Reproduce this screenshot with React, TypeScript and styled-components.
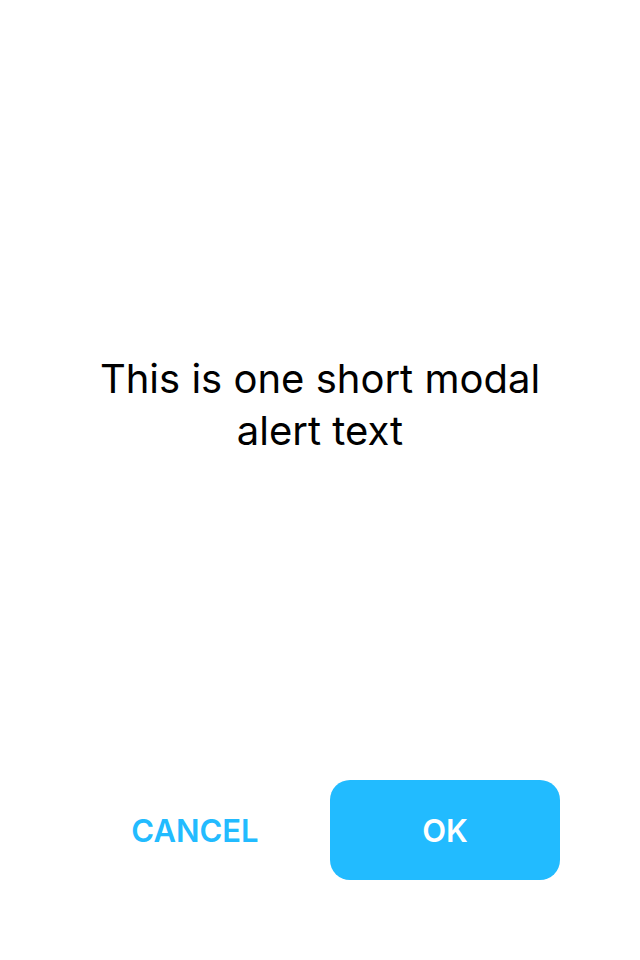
import styled, { createGlobalStyle } from 'styled-components';

const GlobalStyle = createGlobalStyle`
  html, body {
    margin: 0;
    padding: 0;
    background: #ffffff;
  }
  * {
    box-sizing: border-box;
  }
`;

const Screen = styled.div`
  display: flex;
  flex-direction: column;
  width: 640px;
  height: 960px;
  background: #ffffff;
  font-family: Inter, 'Noto Sans', sans-serif;
`;

const Message = styled.div`
  flex: 1;
  display: flex;
  align-items: center;
  justify-content: center;
  padding: 30px 60px 0;
`;

const MessageText = styled.p`
  margin: 0;
  text-align: center;
  font-size: 40px;
  line-height: 52px;
  font-weight: 400;
  color: #000000;
  max-width: 480px;
`;

const Footer = styled.div`
  display: grid;
  grid-template-columns: 1fr 1fr;
  gap: 20px;
  padding: 0 80px 80px;
`;

const Button = styled.button<{ $primary?: boolean }>`
  height: 100px;
  border: none;
  border-radius: 20px;
  font-family: Inter, 'Noto Sans', sans-serif;
  font-size: 31px;
  font-weight: 600;
  cursor: pointer;
  background: ${(p) => (p.$primary ? '#22bbff' : 'transparent')};
  color: ${(p) => (p.$primary ? '#ffffff' : '#22bbff')};
`;

export default function App() {
  return (
    <>
      <GlobalStyle />
      <Screen>
        <Message>
          <MessageText>This is one short modal alert text</MessageText>
        </Message>
        <Footer>
          <Button>CANCEL</Button>
          <Button $primary>OK</Button>
        </Footer>
      </Screen>
    </>
  );
}
